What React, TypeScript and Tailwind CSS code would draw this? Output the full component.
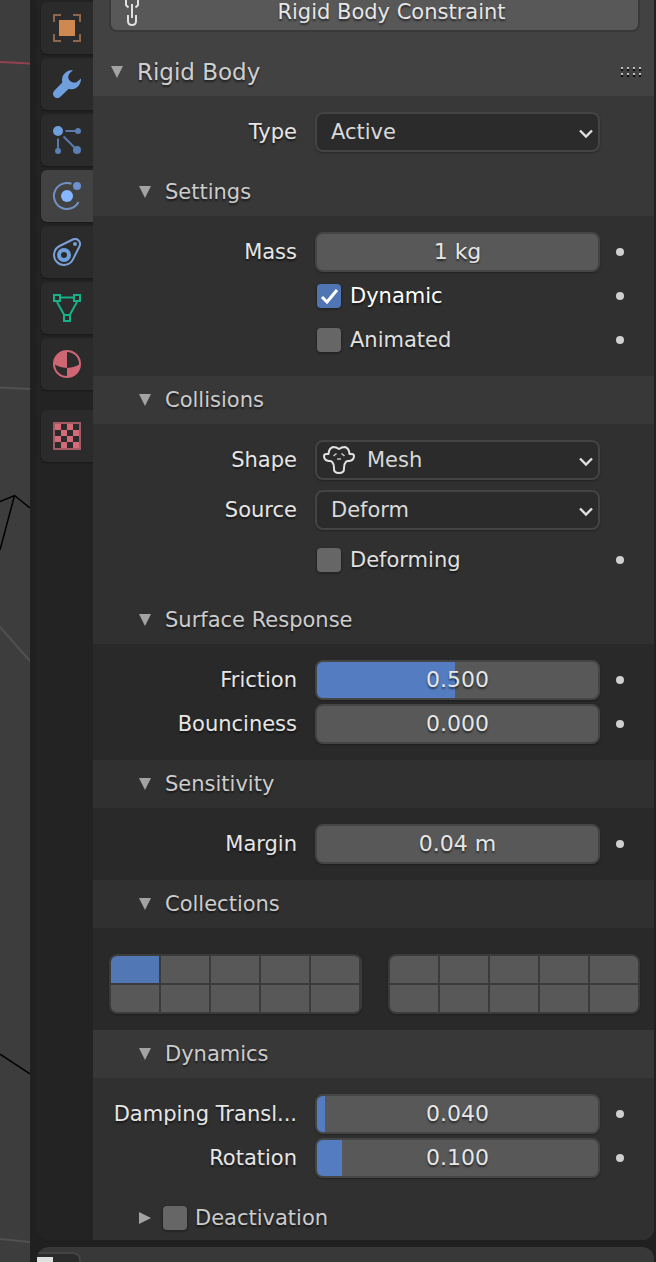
import { useId, useState, type ReactNode } from "react";

const textShadow = "[text-shadow:0_2px_2px_rgba(0,0,0,0.55)]";

/* ---------- icons ---------- */

function TabIcon({ children }: { children: ReactNode }) {
  return (
    <svg width="28" height="28" viewBox="0 0 28 28" fill="none" aria-hidden="true">
      {children}
    </svg>
  );
}

const objectIcon = (
  <TabIcon>
    <path d="M1 8V1H8M20 1H27V8M27 20V27H20M8 27H1V20" stroke="#8d674b" strokeWidth="2" />
    <rect x="6" y="6" width="16" height="16" fill="#ce8850" />
  </TabIcon>
);

const modifierIcon = (
  <TabIcon>
    <path
      d="M20 0C12.5.3 7.8 5.5 9.3 12.6L1.2 20.7C-2.6 25 3.2 30.8 7.4 26.8L15.8 18.7C21.5 21 28 16.5 28 8.5L23.8 12C20.500 14 14.500 10.500 15.300 6.200C15.700 4 18 2 20 0Z"
      fill="#709fdd"
    />
  </TabIcon>
);

const particlesIcon = (
  <TabIcon>
    <path d="M12.500 5H23M5 12.500V23M10.500 10.500L23 23" stroke="#597aa8" strokeWidth="2" />
    <circle cx="5" cy="5" r="5" fill="#709fdd" />
    <circle cx="25" cy="5" r="3" fill="#597fb5" />
    <circle cx="5" cy="25" r="3" fill="#597fb5" />
    <circle cx="24" cy="24" r="4" fill="#597fb5" />
  </TabIcon>
);

const physicsIcon = (
  <TabIcon>
    <path d="M18.500 1.800A13 13 0 1 0 25.500 20" stroke="#7190c4" strokeWidth="2" />
    <circle cx="24" cy="4" r="4" fill="#6b92cf" />
    <circle cx="14" cy="14" r="6" fill="#86b6ff" />
  </TabIcon>
);

const constraintsIcon = (
  <TabIcon>
    <path
      d="M6.600 8A10 10 0 1 0 20 21.400L26.500 8.200A5 5 0 0 0 19.800 1.500Z"
      stroke="#7c9fd6"
      strokeWidth="2"
    />
    <circle cx="11" cy="17" r="5" stroke="#709fdd" strokeWidth="4" />
    <circle cx="22" cy="6" r="2" fill="#709fdd" />
  </TabIcon>
);

const meshDataIcon = (
  <TabIcon>
    <path
      d="M1 1H7V7H1ZM21 1H27V7H21ZM11 21H17V27H11ZM8 3.500H20M4 8L11 20.500M24 8L17 20.500"
      stroke="#17b187"
      strokeWidth="2"
    />
  </TabIcon>
);

const materialIcon = (
  <TabIcon>
    <circle cx="14" cy="14" r="13" stroke="#cf6673" strokeWidth="2" />
    <path d="M14 1V18Q6 17.500 1 14A13 13 0 0 1 14 1Z" fill="#cf6673" />
    <path d="M14 27V18Q22 17.500 27 14A13 13 0 0 1 14 27Z" fill="#cf6673" />
  </TabIcon>
);

const textureIcon = (
  <TabIcon>
    <rect x="1" y="1" width="26" height="26" stroke="#a55a63" strokeWidth="2" />
    <path
      d="M2 2h6v6H2zM14 2h6v6h-6zM8 8h6v6H8zM20 8h6v6h-6zM2 14h6v6H2zM14 14h6v6h-6zM8 20h6v6H8zM20 20h6v6h-6z"
      fill="#d46b79"
    />
  </TabIcon>
);

function ConstraintLinkIcon() {
  return (
    <svg width="16" height="34" viewBox="0 0 16 34" fill="none" aria-hidden="true">
      <g stroke="#e0e0e0" strokeWidth="2">
        <path d="M4.500 15.500L2 13V7Q2 1 8 1T14 7V13L11.500 15.500" />
        <path d="M8 12V26" />
        <path d="M4 23V29Q4 33 8 33T12 29V23" />
      </g>
    </svg>
  );
}

function MonkeyIcon() {
  return (
    <svg width="32" height="28" viewBox="0 0 32 28" fill="none" aria-hidden="true">
      <path
        d="M16 3Q13.500 1 10 1Q6 2 5.500 8Q1 7.500 1 10Q1 14.500 6 15Q8.500 14.500 9.500 16.500Q11 18 11 22Q10.500 27 16 27T21 22Q21 18 22.500 16.500Q23.500 14.500 26 15Q31 14.500 31 10Q31 7.500 26.500 8Q26 2 22 1Q18.500 1 16 3Z"
        stroke="#e2e2e2"
        strokeWidth="2"
        strokeLinejoin="round"
      />
      <path d="M10.500 10L13.500 7.500M21.500 10L18.500 7.500M14 13H18" stroke="#c4c4c4" strokeWidth="1.600" />
    </svg>
  );
}

function Triangle({ open }: { open: boolean }) {
  return (
    <svg width="12" height="12" viewBox="0 0 12 12" className="shrink-0" aria-hidden="true">
      <path d={open ? "M0 0H12L6 12Z" : "M0 0L12 6L0 12Z"} fill="#a3a3a3" />
    </svg>
  );
}

function Grip() {
  return (
    <svg width="22" height="10" viewBox="0 0 22 10" aria-hidden="true">
      {[0, 6, 12, 18].map((x) =>
        [0, 6].map((y) => (
          <g key={`${x}-${y}`}>
            <rect x={x + 1} y={y} width="2" height="2" fill="#bdbdbd" />
            <rect x={x + 1} y={y + 2} width="2" height="2" fill="#0c0c0c" />
          </g>
        )),
      )}
    </svg>
  );
}

/* ---------- form rows ---------- */

function Row({ label, htmlFor, dot, children }: { label?: string; htmlFor?: string; dot?: boolean; children: ReactNode }) {
  return (
    <div className="flex h-10 items-center">
      <div className="flex w-[204px] shrink-0 justify-end whitespace-nowrap">
        {label && (
          <label htmlFor={htmlFor} className={`text-[#e6e6e6] ${textShadow}`}>
            {label}
          </label>
        )}
      </div>
      <div className="ml-[18px] min-w-0 flex-1">{children}</div>
      <div className="flex w-[54px] shrink-0 pl-4">
        {dot && <button aria-label="Animate property" className="size-2 rounded-full bg-[#cfcfcf]" />}
      </div>
    </div>
  );
}

function ValueRow({ label, value, fill }: { label: string; value: string; fill?: number }) {
  const id = useId();
  return (
    <Row label={label} htmlFor={id} dot>
      <div className="relative h-10 overflow-hidden rounded-lg border-2 border-[#454545] bg-[#585858] shadow-[0_1px_2px_rgba(0,0,0,0.3)]">
        {fill !== undefined && (
          <div className="absolute inset-y-0 left-0 bg-[#547dc1]" style={{ width: `calc(${fill * 100}% - 3px)` }} />
        )}
        <input
          id={id}
          defaultValue={value}
          className={`relative block h-full w-full bg-transparent pb-[2px] text-center text-[22px] text-[#e6e6e6] outline-none ${textShadow}`}
        />
      </div>
    </Row>
  );
}

function SelectRow({ label, options, icon }: { label: string; options: string[]; icon?: ReactNode }) {
  const id = useId();
  return (
    <Row label={label} htmlFor={id}>
      <div className="relative h-10">
        <select
          id={id}
          className={`h-full w-full appearance-none rounded-lg border-2 border-[#444444] bg-[#2b2b2b] text-[#d9d9d9] shadow-[0_1px_2px_rgba(0,0,0,0.3)] outline-none ${icon ? "pl-[50px]" : "pl-[14px]"}`}
        >
          {options.map((o) => (
            <option key={o}>{o}</option>
          ))}
        </select>
        {icon && <span className="pointer-events-none absolute top-[6px] left-2">{icon}</span>}
        <svg
          width="14"
          height="10"
          viewBox="0 0 14 10"
          fill="none"
          className="pointer-events-none absolute top-[17px] right-[7px]"
          aria-hidden="true"
        >
          <path d="M1 1.500L7 7.500L13 1.500" stroke="#e0e0e0" strokeWidth="2.400" />
        </svg>
      </div>
    </Row>
  );
}

function CheckBox({ id, checked, onChange }: { id: string; checked: boolean; onChange: () => void }) {
  return (
    <span className="relative size-6 shrink-0">
      <input
        id={id}
        type="checkbox"
        checked={checked}
        onChange={onChange}
        className="block size-6 appearance-none rounded bg-[#666666] shadow-[0_1px_2px_1px_rgba(0,0,0,0.25)] checked:bg-[#4f76b3]"
      />
      {checked && (
        <svg width="24" height="24" viewBox="0 0 24 24" fill="none" className="pointer-events-none absolute inset-0" aria-hidden="true">
          <path d="M5 13L10 18L20 6" stroke="#ffffff" strokeWidth="3" />
        </svg>
      )}
    </span>
  );
}

function CheckRow({ label, initial = false }: { label: string; initial?: boolean }) {
  const id = useId();
  const [on, setOn] = useState(initial);
  return (
    <Row dot>
      <div className="flex items-center gap-[9px] pl-[2px]">
        <CheckBox id={id} checked={on} onChange={() => setOn(!on)} />
        <label htmlFor={id} className={`${on ? "text-white" : "text-[#e0e0e0]"} ${textShadow}`}>
          {label}
        </label>
      </div>
    </Row>
  );
}

/* ---------- panels ---------- */

function SubPanel({ title, bodyClass, children }: { title: string; bodyClass: string; children: ReactNode }) {
  const [open, setOpen] = useState(true);
  return (
    <section>
      <h3>
        <button
          aria-expanded={open}
          onClick={() => setOpen(!open)}
          className={`flex h-12 w-full items-center gap-[14px] pl-[46px] text-left text-[#cccccc] ${textShadow}`}
        >
          <Triangle open={open} />
          {title}
        </button>
      </h3>
      {open && <div className={bodyClass}>{children}</div>}
    </section>
  );
}

function LayerBlock({ start, active }: { start: number; active?: number }) {
  return (
    <div className="grid flex-1 grid-cols-5 gap-[2px] overflow-hidden rounded-lg border-2 border-[#3b3b3b] bg-[#3b3b3b] shadow-[0_1px_2px_rgba(0,0,0,0.3)]">
      {Array.from({ length: 10 }, (_, i) => (
        <button
          key={i}
          aria-label={`Collection ${start + i}`}
          aria-pressed={i === active}
          className={`h-[27px] ${i === active ? "bg-[#5277b5]" : "bg-[#585858]"}`}
        />
      ))}
    </div>
  );
}

const tabs = [
  { name: "Object", icon: objectIcon },
  { name: "Modifiers", icon: modifierIcon },
  { name: "Particles", icon: particlesIcon },
  { name: "Physics", icon: physicsIcon, active: true },
  { name: "Constraints", icon: constraintsIcon },
  { name: "Object Data", icon: meshDataIcon },
  { name: "Material", icon: materialIcon },
  { name: "Texture", icon: textureIcon, apart: true },
];

export default function App() {
  const deactivationId = useId();
  const [deactivation, setDeactivation] = useState(false);

  return (
    <main className="flex h-screen overflow-hidden bg-[#202020] font-['DejaVu_Sans',sans-serif] text-[21px] leading-6">
      <div className="w-[30px] shrink-0 overflow-hidden bg-[#3d3d3d]">
        <svg width="30" height="1262" viewBox="0 0 30 1262" fill="none" aria-hidden="true">
          <path d="M0 62L30 63.500" stroke="#91414f" strokeWidth="2" />
          <path d="M0 387.500L30 389M0 627L30 661M0 1239L30 1242" stroke="#515151" strokeWidth="2" />
          <path d="M0 501.500L14.500 495.500L30 508M14.500 495.500L0 550M0 1054L30 1074" stroke="#000000" strokeWidth="1.500" />
        </svg>
      </div>

      <div className="ml-[7px] flex min-w-0 flex-1 flex-col gap-[7px] pr-[2px]">
        <div className="flex min-h-0 flex-1 overflow-hidden rounded-b-xl bg-[#232323]">
          <nav aria-label="Properties tabs" className="flex w-14 shrink-0 flex-col gap-1 pt-[2px] pl-1">
            {tabs.map((t) => (
              <button
                key={t.name}
                aria-label={t.name}
                aria-current={t.active ? "page" : undefined}
                className={`flex h-[52px] shrink-0 items-center justify-center rounded-l-md shadow-[0_1px_2px_rgba(0,0,0,0.35)] ${t.active ? "bg-[#424242]" : "bg-[#2b2b2b]"} ${t.apart ? "mt-4" : ""}`}
              >
                {t.icon}
              </button>
            ))}
          </nav>

          <div className="min-w-0 flex-1 overflow-hidden bg-[#303030]">
            <div className="flex flex-col bg-[#424242] pr-[14px] pb-4 pl-4">
              <button
                className={`relative -mt-2 h-10 rounded-lg border-2 border-[#393939] bg-[#585858] pl-[34px] text-[#e6e6e6] ${textShadow}`}
              >
                <span className="absolute bottom-1 left-[13px]">
                  <ConstraintLinkIcon />
                </span>
                Rigid Body Constraint
              </button>
            </div>

            <section className="bg-[#383838]">
              <h2 className="flex h-12 items-center bg-[#424242] pr-3 pl-[18px]">
                <button aria-expanded="true" className={`flex flex-1 items-center gap-[14px] text-left text-[23px] text-[#cfcfcf] ${textShadow}`}>
                  <Triangle open />
                  Rigid Body
                </button>
                <Grip />
              </h2>
              <div className="py-4">
                <SelectRow label="Type" options={["Active", "Passive"]} />
              </div>

              <SubPanel title="Settings" bodyClass="flex flex-col gap-1 bg-[#303030] py-4">
                <ValueRow label="Mass" value="1 kg" />
                <CheckRow label="Dynamic" initial />
                <CheckRow label="Animated" />
              </SubPanel>

              <SubPanel title="Collisions" bodyClass="bg-[#303030]">
                <div className="flex flex-col gap-[10px] py-4">
                  <SelectRow label="Shape" options={["Mesh", "Box", "Sphere"]} icon={<MonkeyIcon />} />
                  <SelectRow label="Source" options={["Deform", "Base", "Final"]} />
                  <CheckRow label="Deforming" />
                </div>
                <SubPanel title="Surface Response" bodyClass="flex flex-col gap-1 bg-[#292929] py-4">
                  <ValueRow label="Friction" value="0.500" fill={0.5} />
                  <ValueRow label="Bounciness" value="0.000" />
                </SubPanel>
                <SubPanel title="Sensitivity" bodyClass="bg-[#292929] py-4">
                  <ValueRow label="Margin" value="0.04 m" />
                </SubPanel>
                <SubPanel title="Collections" bodyClass="flex gap-[26px] bg-[#292929] pt-[26px] pr-[14px] pb-4 pl-4">
                  <LayerBlock start={1} active={0} />
                  <LayerBlock start={11} />
                </SubPanel>
              </SubPanel>

              <SubPanel title="Dynamics" bodyClass="bg-[#303030]">
                <div className="flex flex-col gap-1 py-4">
                  <ValueRow label="Damping Transl..." value="0.040" fill={0.04} />
                  <ValueRow label="Rotation" value="0.100" fill={0.1} />
                </div>
                <div className="flex h-12 items-center pl-[46px]">
                  <button aria-label="Expand Deactivation" aria-expanded="false">
                    <Triangle open={false} />
                  </button>
                  <div className="ml-3 flex items-center gap-2">
                    <CheckBox id={deactivationId} checked={deactivation} onChange={() => setDeactivation(!deactivation)} />
                    <label htmlFor={deactivationId} className={`text-[#cccccc] ${textShadow}`}>
                      Deactivation
                    </label>
                  </div>
                </div>
              </SubPanel>
            </section>
          </div>
        </div>

        <div className="h-[15px] shrink-0 overflow-hidden rounded-t-xl bg-[#383838] pt-[5px]">
          <button
            aria-label="Editor type"
            className="flex h-10 w-11 items-start rounded-tr-lg border-2 border-l-0 border-[#444444] bg-[#2b2b2b] pt-[3px]"
          >
            <span className="h-6 w-4 bg-[#e0e0e0]" />
          </button>
        </div>
      </div>
    </main>
  );
}
